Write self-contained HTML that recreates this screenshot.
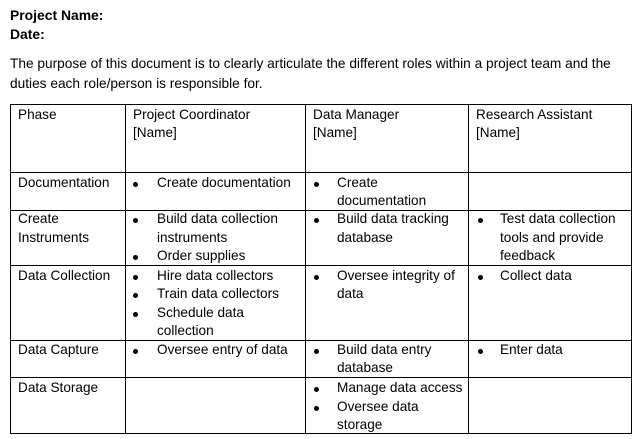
<!DOCTYPE html>
<html><head><meta charset="utf-8"><style>
body{margin:0;width:639px;height:439px;background:#fff;position:relative;overflow:hidden;font-family:"Liberation Sans",sans-serif;font-size:13.6px;color:#000}
.t{position:absolute;white-space:nowrap;line-height:18px;height:18px;transform:translateY(-9px)}
.b{font-weight:bold;font-size:13.9px}
.h{position:absolute;height:1px;background:#000;left:10px;width:622px}
.v{position:absolute;width:1px;background:#000;top:104px;height:330px}
.d{position:absolute;width:5px;height:5px;border-radius:50%;background:#000}
</style></head><body>
<div class="t b" style="left:10px;top:15px">Project Name:</div>
<div class="t b" style="left:10px;top:34px">Date:</div>
<div class="t" style="left:10px;top:64px;font-size:13.7px">The purpose of this document is to clearly articulate the different roles within a project team and the</div>
<div class="t" style="left:10px;top:84px;font-size:13.7px">duties each role/person is responsible for.</div>

<div class="h" style="top:104px"></div>
<div class="h" style="top:172px"></div>
<div class="h" style="top:210px"></div>
<div class="h" style="top:265px"></div>
<div class="h" style="top:340px"></div>
<div class="h" style="top:377px"></div>
<div class="h" style="top:433px"></div>
<div class="v" style="left:10px"></div>
<div class="v" style="left:125px"></div>
<div class="v" style="left:305px"></div>
<div class="v" style="left:468px"></div>
<div class="v" style="left:631px"></div>

<div class="t" style="left:18px;top:115px">Phase</div>
<div class="t" style="left:133px;top:115px">Project Coordinator</div>
<div class="t" style="left:133px;top:133px">[Name]</div>
<div class="t" style="left:313px;top:115px">Data Manager</div>
<div class="t" style="left:313px;top:133px">[Name]</div>
<div class="t" style="left:476px;top:115px">Research Assistant</div>
<div class="t" style="left:476px;top:133px">[Name]</div>

<div class="t" style="left:18px;top:183px">Documentation</div>
<div class="d" style="left:133px;top:182px"></div><div class="t" style="left:157px;top:183px">Create documentation</div>
<div class="d" style="left:314px;top:182px"></div><div class="t" style="left:337px;top:183px">Create</div>
<div class="t" style="left:337px;top:201px">documentation</div>

<div class="t" style="left:18px;top:219px">Create</div>
<div class="t" style="left:18px;top:238px">Instruments</div>
<div class="d" style="left:133px;top:218px"></div><div class="t" style="left:157px;top:219px">Build data collection</div>
<div class="t" style="left:157px;top:238px">instruments</div>
<div class="d" style="left:133px;top:255px"></div><div class="t" style="left:157px;top:256px">Order supplies</div>
<div class="d" style="left:314px;top:218px"></div><div class="t" style="left:337px;top:219px">Build data tracking</div>
<div class="t" style="left:337px;top:238px">database</div>
<div class="d" style="left:478px;top:218px"></div><div class="t" style="left:500px;top:219px">Test data collection</div>
<div class="t" style="left:500px;top:238px">tools and provide</div>
<div class="t" style="left:500px;top:256px">feedback</div>

<div class="t" style="left:18px;top:276px">Data Collection</div>
<div class="d" style="left:133px;top:275px"></div><div class="t" style="left:157px;top:276px">Hire data collectors</div>
<div class="d" style="left:133px;top:293px"></div><div class="t" style="left:157px;top:294px">Train data collectors</div>
<div class="d" style="left:133px;top:312px"></div><div class="t" style="left:157px;top:313px">Schedule data</div>
<div class="t" style="left:157px;top:331px">collection</div>
<div class="d" style="left:314px;top:275px"></div><div class="t" style="left:337px;top:276px">Oversee integrity of</div>
<div class="t" style="left:337px;top:294px">data</div>
<div class="d" style="left:478px;top:275px"></div><div class="t" style="left:500px;top:276px">Collect data</div>

<div class="t" style="left:18px;top:350px">Data Capture</div>
<div class="d" style="left:133px;top:349px"></div><div class="t" style="left:157px;top:350px">Oversee entry of data</div>
<div class="d" style="left:314px;top:349px"></div><div class="t" style="left:337px;top:350px">Build data entry</div>
<div class="t" style="left:337px;top:368px">database</div>
<div class="d" style="left:478px;top:349px"></div><div class="t" style="left:500px;top:350px">Enter data</div>

<div class="t" style="left:18px;top:388px">Data Storage</div>
<div class="d" style="left:314px;top:387px"></div><div class="t" style="left:337px;top:388px">Manage data access</div>
<div class="d" style="left:314px;top:406px"></div><div class="t" style="left:337px;top:407px">Oversee data</div>
<div class="t" style="left:337px;top:425px">storage</div>
</body></html>
